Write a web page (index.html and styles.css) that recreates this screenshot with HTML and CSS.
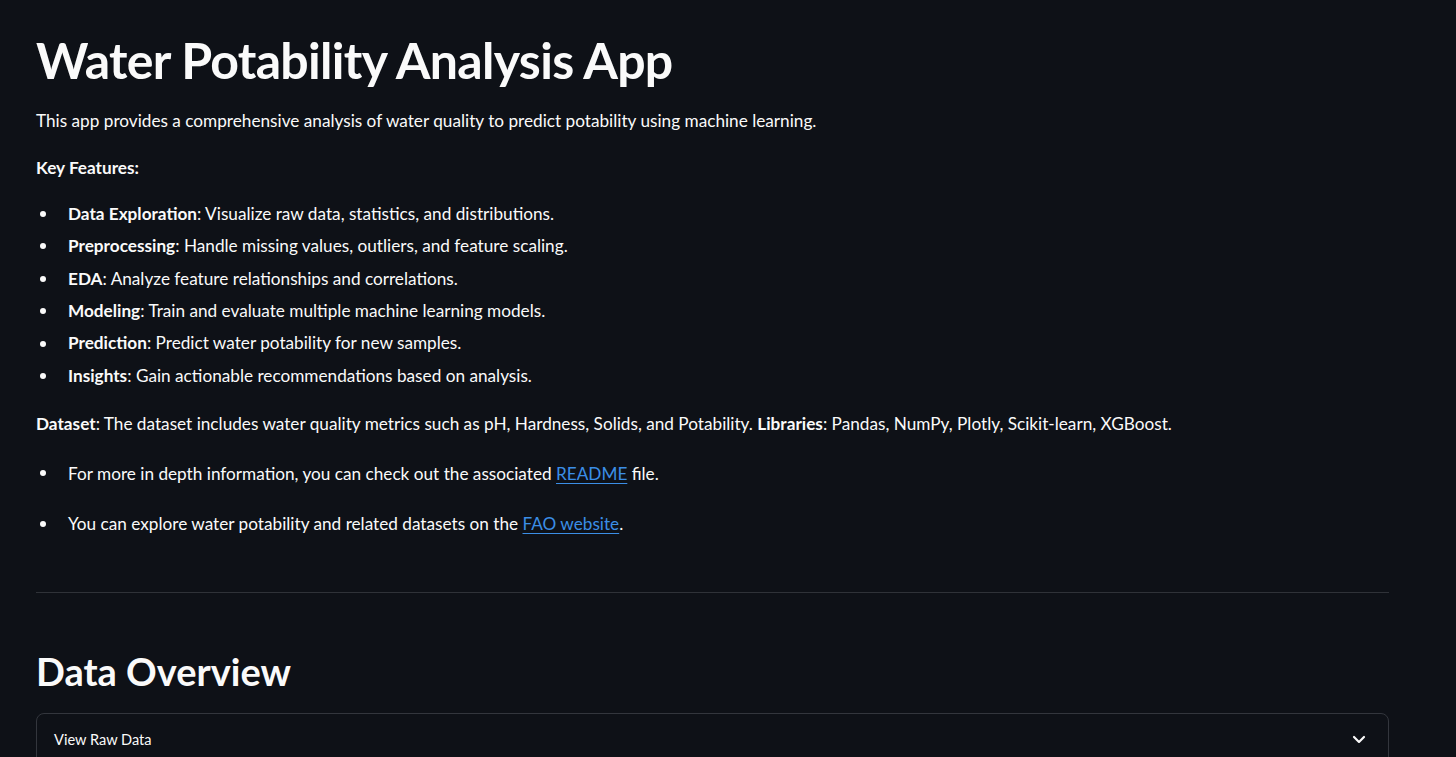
FILE: index.html
```html
<!DOCTYPE html>
<html lang="en">
<head>
<meta charset="utf-8">
<title>Water Potability Analysis App</title>
<link rel="stylesheet" href="styles.css">
</head>
<body>
<main class="page">
  <h1 class="title">Water Potability Analysis App</h1>
  <p class="para">This app provides a comprehensive analysis of water quality to predict potability using machine learning.</p>
  <p class="para"><strong>Key Features:</strong></p>
  <ul class="features">
    <li><strong>Data Exploration</strong>: Visualize raw data, statistics, and distributions.</li>
    <li><strong>Preprocessing</strong>: Handle missing values, outliers, and feature scaling.</li>
    <li><strong>EDA</strong>: Analyze feature relationships and correlations.</li>
    <li><strong>Modeling</strong>: Train and evaluate multiple machine learning models.</li>
    <li><strong>Prediction</strong>: Predict water potability for new samples.</li>
    <li><strong>Insights</strong>: Gain actionable recommendations based on analysis.</li>
  </ul>
  <p class="para dataset"><strong>Dataset</strong>: The dataset includes water quality metrics such as pH, Hardness, Solids, and Potability. <strong>Libraries</strong>: Pandas, NumPy, Plotly, Scikit-learn, XGBoost.</p>
  <ul class="links">
    <li>For more in depth information, you can check out the associated <a href="#">README</a> file.</li>
    <li>You can explore water potability and related datasets on the <a href="#">FAO website</a>.</li>
  </ul>
  <hr class="divider">
  <h2 class="section">Data Overview</h2>
  <div class="expander">
    <span class="exp-label">View Raw Data</span>
    <svg class="chevron" width="20" height="20" viewBox="0 0 24 24" fill="none" stroke="#fafafa" stroke-width="2.6" stroke-linecap="round" stroke-linejoin="round"><path d="M6 9.5l6 6 6-6"/></svg>
  </div>
</main>
</body>
</html>
```

FILE: styles.css
```css
html, body {
  margin: 0;
  padding: 0;
  background: #0e1117;
  height: 100%;
  overflow: hidden;
}
body {
  color: #fafafa;
  font-family: "Lato", "Open Sans", sans-serif;
  font-size: 17.2px;
}
.page {
  width: 1353px;
  padding: 0 0 0 36px;
}
.title {
  margin: 30px 0 0;
  font-size: 50px;
  line-height: 60px;
  font-weight: 700;
  letter-spacing: -0.7px;
}
.para {
  margin: 15.5px 0 0;
  line-height: 29px;
}
.para + .para {
  margin-top: 18px;
}
strong {
  font-weight: 700;
}
.features {
  list-style: none;
  margin: 16.3px 0 0;
  padding: 0;
}
.features li,
.links li {
  position: relative;
  padding-left: 32px;
}
.features li::before,
.links li::before {
  content: "";
  position: absolute;
  left: 4px;
  top: 50%;
  width: 6px;
  height: 6px;
  margin-top: -3px;
  border-radius: 50%;
  background: #fafafa;
}
.features li {
  line-height: 32.4px;
}
.dataset {
  margin-top: 16.3px;
}
.links {
  list-style: none;
  margin: 21px 0 0;
  padding: 0;
}
.links li {
  line-height: 29px;
}
.links li + li {
  margin-top: 21.5px;
}
a {
  color: #3b8ee6;
  text-decoration: underline;
  text-underline-offset: 3px;
}
.divider {
  margin: 54px 0 0;
  border: none;
  height: 1px;
  background: #2f3238;
}
.section {
  margin: 52px 0 0;
  font-size: 38px;
  line-height: 52px;
  font-weight: 700;
}
.expander {
  margin-top: 16px;
  border: 1px solid #33363d;
  border-radius: 8px;
  height: 80px;
  box-sizing: border-box;
  display: flex;
  align-items: flex-start;
  justify-content: space-between;
  padding: 14px 19px 0 17px;
}
.exp-label {
  font-size: 14.6px;
  line-height: 24px;
}
.chevron {
  margin-top: 1px;
}
```
